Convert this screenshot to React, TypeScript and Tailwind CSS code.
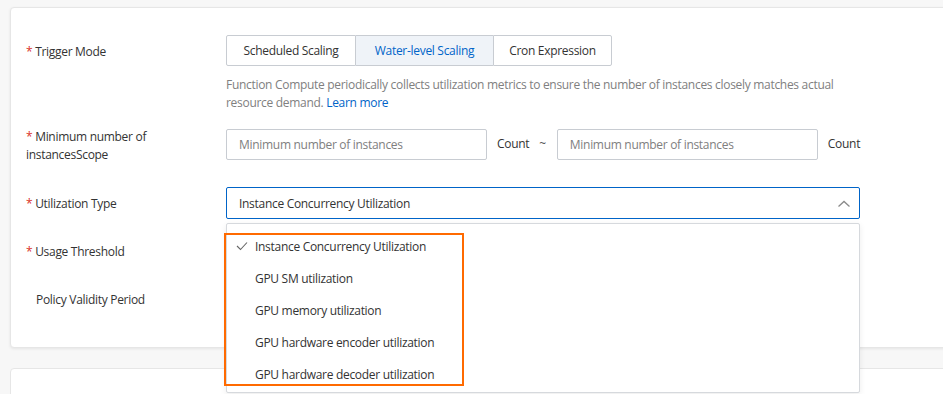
import React from "react";

const font = { fontFamily: '"Open Sans", "Noto Sans", Arial, sans-serif' };

function Label({ text, required = true, className = "" }: { text: React.ReactNode; required?: boolean; className?: string }) {
  return (
    <div className={`w-[200px] shrink-0 text-[12px] leading-[18px] text-[#333] ${className}`}>
      {required ? <span className="text-[#d93026]">* </span> : <span className="inline-block w-[10px]" />}
      {text}
    </div>
  );
}

export default function App() {
  return (
    <div className="relative w-[943px] h-[394px] overflow-hidden bg-[#f7f7f7] tracking-[-0.3px]" style={font}>
      <div className="ml-[10px] mt-[7px] w-[960px] h-[341px] bg-white border border-[#e6e6e6] rounded-[4px] shadow-[0_1px_3px_rgba(0,0,0,0.08)] pl-[15px] pt-[27px]">
        {/* Row 1 */}
        <div className="flex">
          <Label text="Trigger Mode" className="pt-[8px]" />
          <div>
            <div className="flex h-[31px] text-[12px] text-[#333]">
              <div className="w-[130px] pt-[1px] flex items-center justify-center border border-[#c8ccd2] rounded-l-[2px]">Scheduled Scaling</div>
              <div className="w-[137px] pt-[1px] flex items-center justify-center border-y border-[#c8ccd2] bg-[#eff3f8] text-[#0064c8]">Water-level Scaling</div>
              <div className="w-[119px] pt-[1px] flex items-center justify-center border border-[#c8ccd2] rounded-r-[2px]">Cron Expression</div>
            </div>
            <div className="mt-[10px] w-[634px] text-[12px] leading-[18px] text-[#808080]">
              <div className="whitespace-nowrap">Function Compute periodically collects utilization metrics to ensure the number of instances closely matches actual</div>
              <div>
                resource demand. <span className="text-[#0064c8]">Learn more</span>
              </div>
            </div>
          </div>
        </div>
        {/* Row 2 */}
        <div className="flex mt-[16px]">
          <Label text={<>Minimum number of<br />instancesScope</>} />
          <div className="flex items-center h-[31px] pt-[1px] text-[12px] text-[#333]">
            <div className="w-[261px] h-[31px] border border-[#c8ccd2] rounded-[2px] flex items-center pl-[12px] pt-[1px] text-[#808080]">Minimum number of instances</div>
            <span className="ml-[10px]">Count</span>
            <span className="ml-[10px] text-[#555]">~</span>
            <div className="ml-[11px] w-[261px] h-[31px] border border-[#c8ccd2] rounded-[2px] flex items-center pl-[12px] pt-[1px] text-[#808080]">Minimum number of instances</div>
            <span className="ml-[10px]">Count</span>
          </div>
        </div>
        {/* Row 3 */}
        <div className="flex mt-[23px]">
          <Label text="Utilization Type" className="pt-[8px]" />
          <div className="w-[634px] h-[32px] border border-[#0064c8] rounded-[2px] flex items-center justify-between pl-[12px] pr-[8px] pt-[1px] text-[12px] text-[#333]">
            <span>Instance Concurrency Utilization</span>
            <svg width="14" height="10" viewBox="0 0 14 10">
              <polyline points="1.5,7.5 7,2.5 12.5,7.5" fill="none" stroke="#8a8a8a" strokeWidth="1.3" />
            </svg>
          </div>
        </div>
        {/* Row 4 */}
        <div className="flex mt-[16px] h-[31px]">
          <Label text="Usage Threshold" className="pt-[8px]" />
        </div>
        {/* Row 5 */}
        <div className="flex mt-[17px] h-[31px]">
          <Label text="Policy Validity Period" required={false} className="pt-[8px]" />
        </div>
      </div>
      <div className="ml-[10px] mt-[20px] w-[960px] h-[60px] bg-white border border-[#e6e6e6] rounded-[4px]" />

      {/* Dropdown */}
      <div className="absolute left-[226px] top-[223px] w-[634px] h-[170px] bg-white border border-[#d6d9dd] rounded-[2px] shadow-[0_2px_6px_rgba(0,0,0,0.08)] pt-[7px] text-[12px] text-[#333]">
        {[
          "Instance Concurrency Utilization",
          "GPU SM utilization",
          "GPU memory utilization",
          "GPU hardware encoder utilization",
          "GPU hardware decoder utilization",
        ].map((t, i) => (
          <div key={t} className="relative h-[32px] flex items-center pl-[28px]">
            {i === 0 && (
              <svg className="absolute left-[9px] top-[10px]" width="12" height="10" viewBox="0 0 12 10">
                <polyline points="1,5 4.5,8.5 11,1.5" fill="none" stroke="#666" strokeWidth="1.1" />
              </svg>
            )}
            {t}
          </div>
        ))}
      </div>

      {/* Annotation */}
      <div className="absolute left-[224px] top-[233px] w-[240px] h-[153px] border-2 border-[#ff6a00]" />
    </div>
  );
}
